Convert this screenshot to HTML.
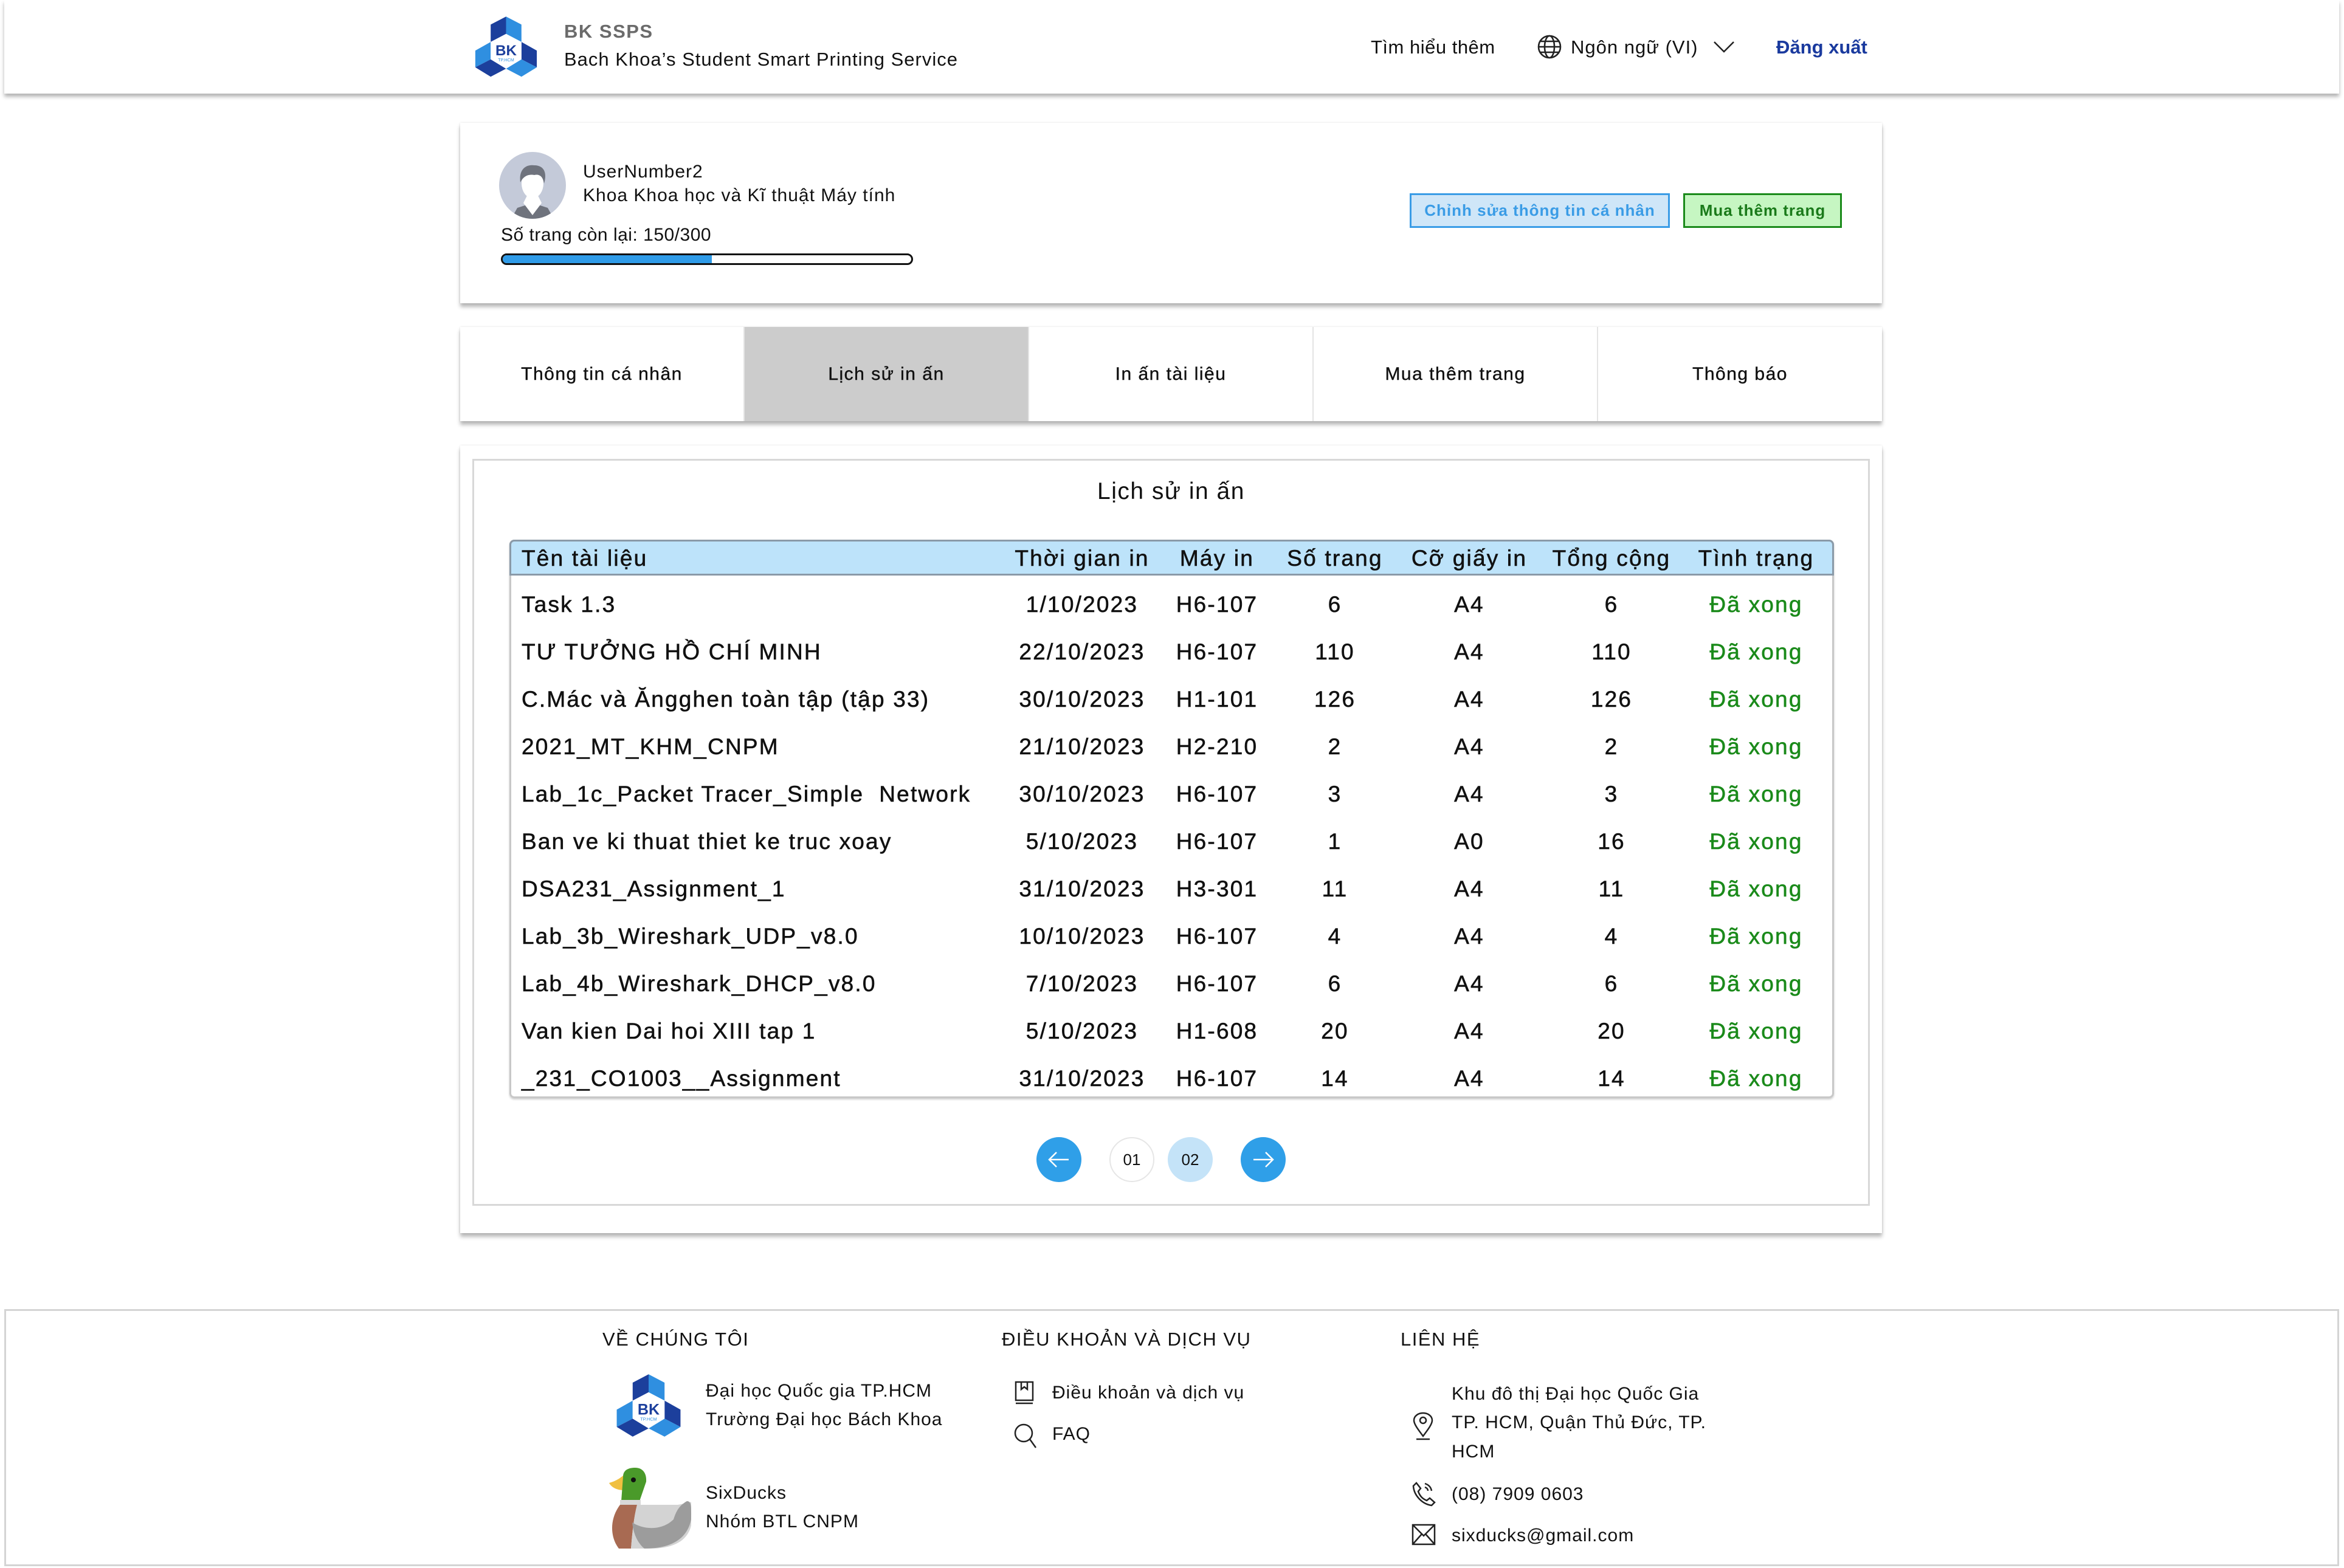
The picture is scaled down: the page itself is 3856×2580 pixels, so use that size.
<!DOCTYPE html>
<html><head><meta charset="utf-8">
<style>
*{margin:0;padding:0;box-sizing:border-box}
body{width:3856px;height:2580px;background:#fff;position:relative;overflow:hidden;font-family:"Liberation Sans","Noto Sans CJK SC",sans-serif;color:#111}
.a{position:absolute;white-space:nowrap}
.card{position:absolute;background:#fff;box-shadow:0 6px 6px rgba(0,0,0,.28),0 0 3px rgba(0,0,0,.12)}
.tab{position:absolute;top:0;height:155px;width:468px;display:flex;align-items:center;justify-content:center;font-size:30px;letter-spacing:1.5px;border-right:2px solid #e4e4e4;-webkit-text-stroke:.4px #111}
.row{position:absolute;left:0;width:2179px;height:78px;font-size:37px;letter-spacing:2.2px;-webkit-text-stroke:.6px currentColor}
.row span{position:absolute;top:50%;transform:translate(-50%,-45%);white-space:nowrap}
.row span.l{transform:translate(0,-45%);left:20px}
.g{color:#1a8a1a}
.pc{position:absolute;width:74px;height:74px;border-radius:50%;display:flex;align-items:center;justify-content:center;font-size:26px}
.fh{font-size:31px;letter-spacing:1.5px}
.ft{font-size:30px;letter-spacing:1px}
</style></head><body>

<!-- header -->
<div class="a" style="left:7px;top:0;width:3841px;height:154px;background:#fff;box-shadow:0 5px 6px rgba(0,0,0,.3)"></div>
<svg class="a" style="left:775px;top:25px" width="115" height="110" viewBox="0 0 100 100">
<polygon points="27,14 50,2 50,28 27,40" fill="#1c3f9c"/>
<polygon points="50,2 73,14 73,40 50,28" fill="#2f8fe0"/>
<polygon points="73,40 96,53 96,78 73,66" fill="#1c3f9c"/>
<polygon points="73,66 96,78 73,92 50,80" fill="#2f8fe0"/>
<polygon points="27,40 4,53 4,78 27,66" fill="#2f8fe0"/>
<polygon points="4,78 27,92 50,80 27,66" fill="#1c3f9c"/>
<polygon points="50,28 73,40 73,66 50,80 27,66 27,40" fill="#fff"/>
<text x="50" y="60" font-size="22" font-weight="bold" fill="#1c3f9c" text-anchor="middle" font-family="Liberation Sans">BK</text>
<text x="50" y="69" font-size="6.5" fill="#2f8fe0" text-anchor="middle" font-family="Liberation Sans">TP.HCM</text>
</svg>
<div class="a" style="left:928px;top:34px;font-size:31px;font-weight:bold;color:#6b6b6b;letter-spacing:1.5px">BK SSPS</div>
<div class="a" style="left:928px;top:80px;font-size:31px;letter-spacing:1px">Bach Khoa’s Student Smart Printing Service</div>
<div class="a" style="left:2255px;top:60px;font-size:31px;letter-spacing:.5px">Tìm hiểu thêm</div>
<svg class="a" style="left:2528px;top:56px" width="42" height="42" viewBox="0 0 42 42" fill="none" stroke="#222" stroke-width="2.6"><circle cx="21" cy="21" r="18"/><ellipse cx="21" cy="21" rx="8" ry="18"/><line x1="3" y1="21" x2="39" y2="21"/><line x1="6" y1="12" x2="36" y2="12"/><line x1="6" y1="30" x2="36" y2="30"/></svg>
<div class="a" style="left:2584px;top:60px;font-size:31px;letter-spacing:1px">Ngôn ngữ (VI)</div>
<svg class="a" style="left:2818px;top:66px" width="36" height="22" viewBox="0 0 36 22" fill="none" stroke="#222" stroke-width="2.5"><polyline points="2,3 18,19 34,3"/></svg>
<div class="a" style="left:2922px;top:60px;font-size:31px;color:#1a3a9e;font-weight:bold">Đăng xuất</div>

<!-- profile card -->
<div class="card" style="left:757px;top:202px;width:2339px;height:297px"></div>
<svg class="a" style="left:821px;top:250px" width="110" height="110" viewBox="0 0 110 110">
<defs><clipPath id="c"><circle cx="55" cy="55" r="55"/></clipPath></defs>
<circle cx="55" cy="55" r="55" fill="#c4cad9"/>
<g clip-path="url(#c)">
<path d="M20 110 L30 92 L55 84 L80 92 L90 110Z" fill="#6f737d"/>
<path d="M40 84 L55 104 L70 84 L64 72 L46 72Z" fill="#fff"/>
<ellipse cx="55" cy="52" rx="18" ry="24" fill="#fff"/>
<path d="M35 50 C32 28 45 20 58 22 C72 22 80 32 74 52 C72 40 66 36 58 38 C48 36 40 40 35 50Z" fill="#6f737d"/>
</g></svg>
<div class="a" style="left:959px;top:266px;font-size:30px;letter-spacing:1px">UserNumber2</div>
<div class="a" style="left:959px;top:305px;font-size:30px;letter-spacing:1px">Khoa Khoa học và Kĩ thuật Máy tính</div>
<div class="a" style="left:824px;top:370px;font-size:30px;letter-spacing:.5px">Số trang còn lại: 150/300</div>
<div class="a" style="left:824px;top:417px;width:678px;height:19px;border:3px solid #111;border-radius:10px;overflow:hidden"><div style="width:344px;height:100%;background:#2f9be8"></div></div>
<div class="a" style="left:2319px;top:318px;width:428px;height:57px;background:#cfe6f8;border:3px solid #3a9ce6;color:#3a9ce6;font-size:26px;font-weight:bold;letter-spacing:1px;display:flex;align-items:center;justify-content:center">Chỉnh sửa thông tin cá nhân</div>
<div class="a" style="left:2769px;top:318px;width:261px;height:57px;background:#c6f6c2;border:3px solid #1a8a1a;color:#1a7a1a;font-size:26px;font-weight:bold;letter-spacing:1px;display:flex;align-items:center;justify-content:center">Mua thêm trang</div>

<!-- tabs -->
<div class="card" style="left:757px;top:538px;width:2339px;height:155px">
<div class="tab" style="left:0">Thông tin cá nhân</div>
<div class="tab" style="left:468px;background:#cccccc">Lịch sử in ấn</div>
<div class="tab" style="left:936px">In ấn tài liệu</div>
<div class="tab" style="left:1404px">Mua thêm trang</div>
<div class="tab" style="left:1872px;width:467px;border-right:none">Thông báo</div>
</div>

<!-- content -->
<div class="card" style="left:757px;top:733px;width:2339px;height:1296px"></div>
<div class="a" style="left:777px;top:755px;width:2299px;height:1229px;border:3px solid #d8d8d8"></div>
<div class="a" style="left:777px;top:787px;width:2299px;text-align:center;font-size:39px;letter-spacing:1.5px">Lịch sử in ấn</div>

<div class="a" style="left:838px;top:888px;width:2179px;height:919px;border:3px solid #c8c8c8;border-radius:8px;box-shadow:0 2px 3px rgba(0,0,0,.2)"></div>
<div class="a" style="left:838px;top:888px;width:2179px;height:59px;background:#bde3fa;border:3px solid #8a9aa8;border-radius:8px 8px 0 0"></div>
<div class="a" style="left:838px;top:878px;width:2179px;height:1000px">
<div class="row" style="top:0px"><span class="l">Tên tài liệu</span><span style="left:942px">Thời gian in</span><span style="left:1164px">Máy in</span><span style="left:1358px">Số trang</span><span style="left:1579px">Cỡ giấy in</span><span style="left:1813px">Tổng cộng</span><span style="left:2051px">Tình trạng</span></div>
<div class="row" style="top:76px"><span class="l">Task 1.3</span><span style="left:942px">1/10/2023</span><span style="left:1164px">H6-107</span><span style="left:1358px">6</span><span style="left:1579px">A4</span><span style="left:1813px">6</span><span class="g" style="left:2051px">Đã xong</span></div>
<div class="row" style="top:154px"><span class="l">TƯ TƯỞNG HỒ CHÍ MINH</span><span style="left:942px">22/10/2023</span><span style="left:1164px">H6-107</span><span style="left:1358px">110</span><span style="left:1579px">A4</span><span style="left:1813px">110</span><span class="g" style="left:2051px">Đã xong</span></div>
<div class="row" style="top:232px"><span class="l">C.Mác và Ăngghen toàn tập (tập 33)</span><span style="left:942px">30/10/2023</span><span style="left:1164px">H1-101</span><span style="left:1358px">126</span><span style="left:1579px">A4</span><span style="left:1813px">126</span><span class="g" style="left:2051px">Đã xong</span></div>
<div class="row" style="top:310px"><span class="l">2021_MT_KHM_CNPM</span><span style="left:942px">21/10/2023</span><span style="left:1164px">H2-210</span><span style="left:1358px">2</span><span style="left:1579px">A4</span><span style="left:1813px">2</span><span class="g" style="left:2051px">Đã xong</span></div>
<div class="row" style="top:388px"><span class="l">Lab_1c_Packet Tracer_Simple&nbsp; Network</span><span style="left:942px">30/10/2023</span><span style="left:1164px">H6-107</span><span style="left:1358px">3</span><span style="left:1579px">A4</span><span style="left:1813px">3</span><span class="g" style="left:2051px">Đã xong</span></div>
<div class="row" style="top:466px"><span class="l">Ban ve ki thuat thiet ke truc xoay</span><span style="left:942px">5/10/2023</span><span style="left:1164px">H6-107</span><span style="left:1358px">1</span><span style="left:1579px">A0</span><span style="left:1813px">16</span><span class="g" style="left:2051px">Đã xong</span></div>
<div class="row" style="top:544px"><span class="l">DSA231_Assignment_1</span><span style="left:942px">31/10/2023</span><span style="left:1164px">H3-301</span><span style="left:1358px">11</span><span style="left:1579px">A4</span><span style="left:1813px">11</span><span class="g" style="left:2051px">Đã xong</span></div>
<div class="row" style="top:622px"><span class="l">Lab_3b_Wireshark_UDP_v8.0</span><span style="left:942px">10/10/2023</span><span style="left:1164px">H6-107</span><span style="left:1358px">4</span><span style="left:1579px">A4</span><span style="left:1813px">4</span><span class="g" style="left:2051px">Đã xong</span></div>
<div class="row" style="top:700px"><span class="l">Lab_4b_Wireshark_DHCP_v8.0</span><span style="left:942px">7/10/2023</span><span style="left:1164px">H6-107</span><span style="left:1358px">6</span><span style="left:1579px">A4</span><span style="left:1813px">6</span><span class="g" style="left:2051px">Đã xong</span></div>
<div class="row" style="top:778px"><span class="l">Van kien Dai hoi XIII tap 1</span><span style="left:942px">5/10/2023</span><span style="left:1164px">H1-608</span><span style="left:1358px">20</span><span style="left:1579px">A4</span><span style="left:1813px">20</span><span class="g" style="left:2051px">Đã xong</span></div>
<div class="row" style="top:856px"><span class="l">_231_CO1003__Assignment</span><span style="left:942px">31/10/2023</span><span style="left:1164px">H6-107</span><span style="left:1358px">14</span><span style="left:1579px">A4</span><span style="left:1813px">14</span><span class="g" style="left:2051px">Đã xong</span></div>
</div>

<!-- pagination -->
<div class="pc" style="left:1705px;top:1871px;background:#2f9fe8"><svg width="40" height="30" viewBox="0 0 40 30" fill="none" stroke="#fff" stroke-width="2.5"><line x1="4" y1="15" x2="36" y2="15"/><polyline points="16,3 4,15 16,27"/></svg></div>
<div class="pc" style="left:1825px;top:1871px;border:2px solid #e6e6e6">01</div>
<div class="pc" style="left:1921px;top:1871px;background:#c4e3f8">02</div>
<div class="pc" style="left:2041px;top:1871px;background:#2f9fe8"><svg width="40" height="30" viewBox="0 0 40 30" fill="none" stroke="#fff" stroke-width="2.5"><line x1="4" y1="15" x2="36" y2="15"/><polyline points="24,3 36,15 24,27"/></svg></div>

<!-- footer -->
<div class="a" style="left:7px;top:2154px;width:3841px;height:423px;border:3px solid #d4d4d4"></div>
<div class="a fh" style="left:991px;top:2186px">VỀ CHÚNG TÔI</div>
<div class="a fh" style="left:1648px;top:2186px">ĐIỀU KHOẢN VÀ DỊCH VỤ</div>
<div class="a fh" style="left:2304px;top:2186px">LIÊN HỆ</div>

<svg class="a" style="left:1008px;top:2259px" width="118" height="114" viewBox="0 0 100 100">
<polygon points="27,14 50,2 50,28 27,40" fill="#1c3f9c"/>
<polygon points="50,2 73,14 73,40 50,28" fill="#2f8fe0"/>
<polygon points="73,40 96,53 96,78 73,66" fill="#1c3f9c"/>
<polygon points="73,66 96,78 73,92 50,80" fill="#2f8fe0"/>
<polygon points="27,40 4,53 4,78 27,66" fill="#2f8fe0"/>
<polygon points="4,78 27,92 50,80 27,66" fill="#1c3f9c"/>
<polygon points="50,28 73,40 73,66 50,80 27,66 27,40" fill="#fff"/>
<text x="50" y="60" font-size="22" font-weight="bold" fill="#1c3f9c" text-anchor="middle" font-family="Liberation Sans">BK</text>
<text x="50" y="69" font-size="6.5" fill="#2f8fe0" text-anchor="middle" font-family="Liberation Sans">TP.HCM</text>
</svg>
<div class="a ft" style="left:1161px;top:2272px">Đại học Quốc gia TP.HCM</div>
<div class="a ft" style="left:1161px;top:2319px">Trường Đại học Bách Khoa</div>

<svg class="a" style="left:990px;top:2400px" width="160" height="160" viewBox="0 0 160 160">
<path d="M12 40 C20 38 28 34 35 28 L36 52 C26 52 16 48 12 40Z" fill="#f0c040"/>
<path d="M35 30 C35 18 45 15 55 15 C68 15 74 25 73 38 L62 70 L32 70 L35 30Z" fill="#4a9a2a"/>
<circle cx="52" cy="35" r="4" fill="#111"/>
<rect x="30" y="68" width="34" height="8" fill="#d8d8d8"/>
<path d="M30 76 L58 76 C52 100 50 125 48 148 L28 148 C14 130 12 100 30 76Z" fill="#a86a52"/>
<path d="M58 76 L125 76 C138 74 145 70 147 72 L147 110 C140 140 110 148 80 148 L48 148 C50 125 52 100 58 76Z" fill="#d3d3d3"/>
<path d="M50 105 C70 118 100 118 118 100 C122 88 126 78 140 70 C148 70 147 80 147 100 C140 135 110 148 70 148 C60 140 52 125 50 105Z" fill="#9c9c9c"/>
</svg>
<div class="a ft" style="left:1161px;top:2440px">SixDucks</div>
<div class="a ft" style="left:1161px;top:2487px">Nhóm BTL CNPM</div>

<svg class="a" style="left:1668px;top:2272px" width="36" height="40" viewBox="0 0 36 40" fill="none" stroke="#222" stroke-width="2.5"><rect x="3" y="2" width="28" height="30"/><line x1="3" y1="37" x2="31" y2="37"/><polyline points="12,2 12,14 17,10 22,14 22,2"/></svg>
<div class="a ft" style="left:1731px;top:2275px">Điều khoản và dịch vụ</div>
<svg class="a" style="left:1666px;top:2340px" width="42" height="44" viewBox="0 0 42 44" fill="none" stroke="#222" stroke-width="2.5"><circle cx="18" cy="18" r="14"/><line x1="28" y1="28" x2="38" y2="42"/></svg>
<div class="a ft" style="left:1731px;top:2343px">FAQ</div>

<svg class="a" style="left:2322px;top:2323px" width="38" height="48" viewBox="0 0 38 48" fill="none" stroke="#222" stroke-width="2.5"><path d="M19 40 C10 28 4 20 4 14 C4 7 11 2 19 2 C27 2 34 7 34 14 C34 20 28 28 19 40Z"/><circle cx="19" cy="14" r="5"/><line x1="8" y1="45" x2="30" y2="45"/></svg>
<div class="a ft" style="left:2388px;top:2277px">Khu đô thị Đại học Quốc Gia</div>
<div class="a ft" style="left:2388px;top:2324px">TP. HCM, Quận Thủ Đức, TP.</div>
<div class="a ft" style="left:2388px;top:2372px">HCM</div>
<svg class="a" style="left:2322px;top:2437px" width="40" height="42" viewBox="0 0 40 42" fill="none" stroke="#222" stroke-width="2.5"><path d="M8 3 L15 12 L11 17 C14 25 18 29 25 32 L30 28 L38 35 L33 40 C18 38 4 24 3 8Z"/><path d="M22 4 C28 6 32 10 33 16"/><path d="M22 10 C25 11 27 13 27 16"/></svg>
<div class="a ft" style="left:2388px;top:2442px">(08) 7909 0603</div>
<svg class="a" style="left:2322px;top:2507px" width="40" height="36" viewBox="0 0 40 36" fill="none" stroke="#222" stroke-width="2.5"><rect x="2" y="2" width="36" height="32"/><polyline points="2,2 20,20 38,2"/><line x1="2" y1="34" x2="17" y2="17"/><line x1="38" y1="34" x2="23" y2="17"/></svg>
<div class="a ft" style="left:2388px;top:2510px">sixducks@gmail.com</div>
</body></html>
